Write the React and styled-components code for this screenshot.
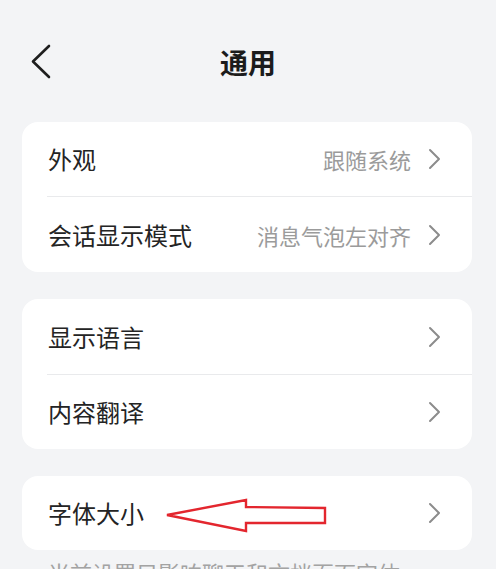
import React from "react";
import styled, { createGlobalStyle } from "styled-components";

const Global = createGlobalStyle`
  html, body {
    margin: 0;
    padding: 0;
    background: #f3f4f6;
    font-family: "Noto Sans CJK SC", "Noto Sans", sans-serif;
  }
`;

const Page = styled.div`
  position: relative;
  width: 496px;
  height: 569px;
  overflow: hidden;
  background: #f3f4f6;
`;

const Header = styled.header`
  height: 120px;
  padding-top: 2px;
  display: flex;
  align-items: center;
  justify-content: center;
  position: relative;
`;

const BackButton = styled.button`
  position: absolute;
  left: 26px;
  top: 38px;
  width: 30px;
  height: 48px;
  border: 0;
  padding: 0;
  background: transparent;
  display: flex;
  align-items: center;
  justify-content: center;
`;

const Title = styled.h1`
  margin: 0;
  font-size: 28px;
  font-weight: 700;
  color: #1c1c1c;
  line-height: 1;
`;

const Card = styled.section`
  margin: 0 24px ${(p) => p.$gap || 0}px 22px;
  background: #ffffff;
  border-radius: 16px;
  overflow: hidden;
`;

const Row = styled.div`
  height: ${(p) => p.$h || 75}px;
  display: flex;
  align-items: center;
  padding: 0 31px 0 26px;
  box-sizing: border-box;
  position: relative;
  & + & {
    border-top: 1px solid #e9eaec;
    margin-left: 25px;
    padding-left: 1px;
  }
`;

const Label = styled.span`
  flex: 1;
  font-size: 24px;
  color: #242424;
  line-height: 1;
`;

const Value = styled.span`
  font-size: 22px;
  color: #9b9b9b;
  line-height: 1;
  margin-right: 17px;
`;

const Note = styled.p`
  margin: 8px 0 0 48px;
  font-size: 22px;
  color: #a3a3a3;
  line-height: 1.3;
  white-space: nowrap;
`;

const Arrow = styled.svg`
  position: absolute;
  left: 164px;
  top: 496px;
  pointer-events: none;
`;

function Chevron() {
  return (
    <svg width="13" height="22" viewBox="0 0 13 22">
      <path d="M2 2 L11 11 L2 20" fill="none" stroke="#8c8c8c" strokeWidth="2" strokeLinecap="round" strokeLinejoin="round" />
    </svg>
  );
}

function Item({ label, value, h }) {
  return (
    <Row $h={h}>
      <Label>{label}</Label>
      {value && <Value>{value}</Value>}
      <Chevron />
    </Row>
  );
}

export default function App() {
  return (
    <>
      <Global />
      <Page>
        <Header>
          <BackButton aria-label="返回">
            <svg width="22" height="36" viewBox="0 0 22 36">
              <path d="M19 2 L3 17.5 L19 33" fill="none" stroke="#1e1e1e" strokeWidth="2.6" strokeLinecap="round" strokeLinejoin="round" />
            </svg>
          </BackButton>
          <Title>通用</Title>
        </Header>

        <Card $gap={27}>
          <Item label="外观" value="跟随系统" h={74} />
          <Item label="会话显示模式" value="消息气泡左对齐" h={76} />
        </Card>

        <Card $gap={27}>
          <Item label="显示语言" h={75} />
          <Item label="内容翻译" h={75} />
        </Card>

        <Card>
          <Item label="字体大小" h={74} />
        </Card>
        <Note>当前设置只影响聊天和文档页面字体</Note>

        <Arrow width="166" height="40" viewBox="0 0 166 40">
          <path
            d="M3 19 L82 4 L82 11 L161 12 L161 27 L82 27 L82 35 Z"
            fill="none"
            stroke="#e3262e"
            strokeWidth="2.4"
            strokeLinejoin="miter"
          />
        </Arrow>
      </Page>
    </>
  );
}
